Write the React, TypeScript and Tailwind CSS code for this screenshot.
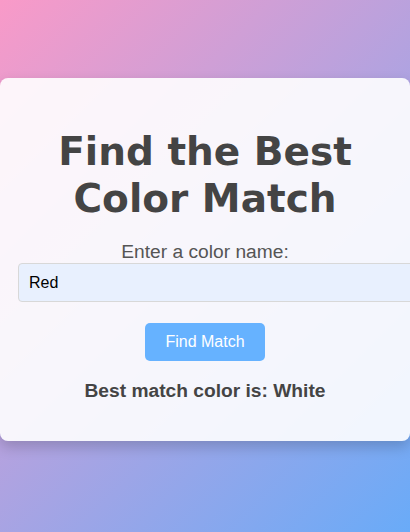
import { useState } from "react";

// Kleine Farbsuche: Name eingeben, nächstbeste Farbe anzeigen.
// Die Suche selbst ist absichtlich dumm — das Bild zeigt "White" für "Red".

export default function App() {
  const [name, setName] = useState("Red");
  const [match] = useState("White");

  return (
    <div className="min-h-screen w-full overflow-hidden bg-[linear-gradient(135deg,#f99ac8,#69abf8)] pt-[78px] font-['Liberation_Sans',Arial,sans-serif]">
      <div className="w-[410px] rounded-[8px] bg-white/90 px-[18px] pt-[50px] pb-[39px] text-center shadow-[0_6px_14px_rgba(0,0,0,0.18)]">
        <h1 className="font-['DejaVu_Sans',Verdana,sans-serif] text-[39px] leading-[47px] font-bold text-[#444]">
          Find the Best Color Match
        </h1>
        <label
          htmlFor="color"
          className="mt-[19px] block text-[19.2px] leading-[normal] text-[#555]"
        >
          Enter a color name:
        </label>
        <input
          id="color"
          type="text"
          value={name}
          onChange={(e) => setName(e.target.value)}
          className="block h-[39px] w-[396px] rounded-[4px] border border-[#d8d8d8] bg-[#e8f0fe] px-[10px] text-left text-[16px] text-black outline-none"
        />
        <button
          type="button"
          className="mt-[21px] h-[38px] rounded-[5px] bg-[#66b2ff] px-[20px] text-[16px] leading-[normal] text-white"
        >
          Find Match
        </button>
        <p className="mt-[19px] text-[19.2px] leading-[normal] font-bold text-[#444]">
          Best match color is: {match}
        </p>
      </div>
    </div>
  );
}
